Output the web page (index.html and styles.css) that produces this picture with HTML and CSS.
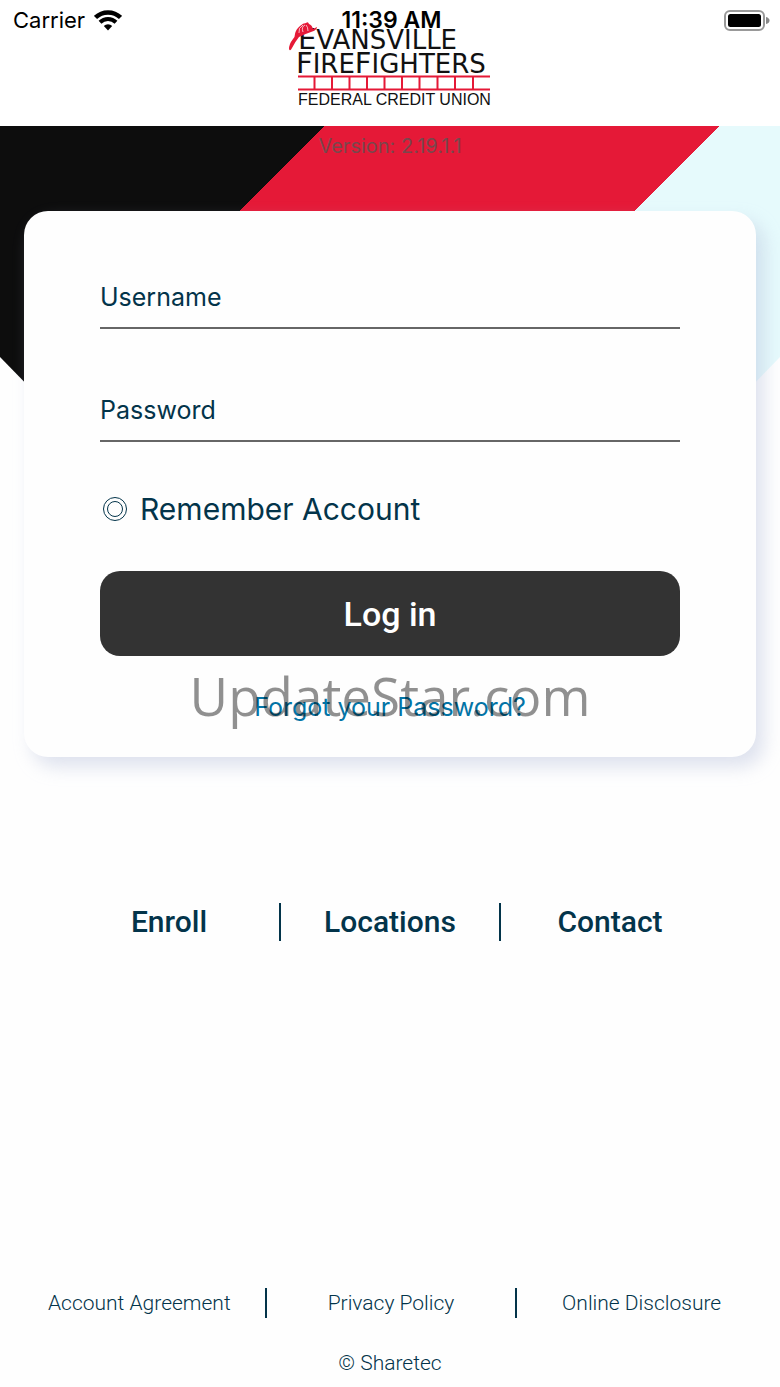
FILE: index.html
```html
<!DOCTYPE html>
<html lang="en">
<head>
    <meta charset="UTF-8">
    <meta name="viewport" content="width=device-width, initial-scale=1.0">
    <title>Evansville FireFighters Federal Credit Union</title>
    <link rel="stylesheet" href="styles.css">
</head>
<body>
    <header class="header">
        <div class="status-bar">
            <div class="carrier">
                <span>Carrier</span>
                <svg class="wifi" viewBox="0 0 28 21" aria-hidden="true">
                    <path d="M1.5 7.5 A18 18 0 0 1 26.5 7.5" fill="none" stroke="#000" stroke-width="4.500"/>
                    <path d="M6 12.3 A11.5 11.5 0 0 1 22 12.3" fill="none" stroke="#000" stroke-width="4"/>
                    <path d="M9.8 16 A6 6 0 0 1 18.2 16 L14 20.5 Z"/>
                </svg>
            </div>
            <time class="clock">11:39 AM</time>
            <svg class="battery" viewBox="0 0 46 21" aria-hidden="true">
                <rect x="1" y="1" width="39" height="19" rx="5" fill="#fff" stroke="#999" stroke-width="2"/>
                <rect x="4" y="4" width="33" height="13" rx="2.5"/>
                <path d="M42 7 Q45.500 8 45.500 10.500 Q45.500 13 42 14 Z" fill="#888"/>
            </svg>
        </div>
        <svg class="logo" viewBox="0 0 204 88" role="img" aria-label="Evansville FireFighters Federal Credit Union">
            <text class="logo-name" x="10" y="29"><tspan class="logo-cap">E</tspan>VANSVILLE</text>
            <text class="logo-name" x="8" y="53"><tspan class="logo-cap">F</tspan>IRE<tspan class="logo-cap">F</tspan>IGHTERS</text>
            <!-- ladder -->
            <path d="M10 56.500H202 M10 69.500H202 M26.500 56V70 M44 56V70 M61.500 56V70 M79 56V70 M96.500 56V70 M114 56V70 M131.500 56V70 M149.500 56V70 M167 56V70 M185 56V70" fill="none" stroke="#e51937" stroke-width="2"/>
            <text class="logo-sub" x="10" y="85">FEDERAL CREDIT UNION</text>
            <!-- helmet -->
            <path d="M1 29 Q1 24 5 19 Q7 17 7 14 Q8 9 12 6 Q15 3 18 3 Q20 1 21 4 Q24 5 25 9 L29 7 Q29 10 23 12 Q17 14 11 17 Q7 22 4 28 Q2 32 1 29 Z" fill="#e51937"/>
            <path d="M11 13 Q10 8 15 5 M15 12 Q13 7 17 5 M20 11 Q20 7 18 5" fill="none" stroke="#fff" stroke-width=".7"/>
        </svg>
    </header>

    <main class="hero">
        <p class="version">Version: 2.19.1.1</p>
        <form class="card">
            <div class="field">
                <label for="username">Username</label>
                <input id="username" type="text" autocomplete="username">
            </div>
            <div class="field">
                <label for="password">Password</label>
                <input id="password" type="password" autocomplete="current-password">
            </div>
            <div class="remember">
                <input id="remember" type="checkbox">
                <label for="remember">Remember Account</label>
            </div>
            <button class="login" type="button">Log in</button>
            <div class="forgot">
                <a href="#">Forgot your Password?</a>
                <span class="watermark">UpdateStar.com</span>
            </div>
        </form>
    </main>

    <nav class="links">
        <a href="#">Enroll</a>
        <a href="#">Locations</a>
        <a href="#">Contact</a>
    </nav>

    <footer class="footer">
        <div class="legal">
            <a href="#">Account Agreement</a>
            <a href="#">Privacy Policy</a>
            <a href="#">Online Disclosure</a>
        </div>
        <p class="copyright">© Sharetec</p>
    </footer>
</body>
</html>
```

FILE: styles.css
```css
* {
    box-sizing: border-box;
}

body {
    margin: 0;
    min-height: 100vh;
    display: flex;
    flex-direction: column;
    background: #fefefe;
    color: #03344a;
    font-family: Inter, "Liberation Sans", sans-serif;
}

a {
    color: inherit;
    text-decoration: none;
}

p {
    margin: 0;
}

/* Header */
.header {
    position: relative;
    display: flex;
    justify-content: center;
    padding: 20px 0 18px;
    background: #fff;
}

.logo {
    width: 204px;
    height: 88px;
}

.logo-name {
    font: 26px "DejaVu Sans", sans-serif;
    fill: #111;
}

.logo-cap {
    font-size: 29px;
}

.logo-sub {
    font: 16px "Liberation Sans", sans-serif;
    fill: #111;
}

/* The status bar lies over the header */
.status-bar {
    position: absolute;
    top: 0;
    left: 0;
    right: 0;
    display: grid;
    grid-template-columns: 1fr auto 1fr;
    align-items: center;
    height: 40px;
    padding: 0 10px 0 13px;
    color: #000;
    font-size: 22px;
}

.carrier {
    display: flex;
    align-items: center;
    gap: 9px;
}

.wifi {
    width: 28px;
    height: 21px;
}

.clock {
    font-size: 23px;
    font-weight: 600;
}

.battery {
    width: 46px;
    height: 21px;
    justify-self: end;
}

/* Login */
.hero {
    position: relative;
    padding: 0 24px;
}

.hero::before {
    content: "";
    position: absolute;
    inset: 0;
    z-index: -1;
    background: linear-gradient(135deg, #0d0d0d 23%, #e51937 23%, #e51937 51%, #e6fafc 51%);
    clip-path: polygon(0 0, 100% 0, 100% 231px, 50% 100%, 0 231px);
}

.version {
    height: 85px;
    padding-top: 8px;
    text-align: center;
    font-size: 20px;
    line-height: 24px;
    color: #79474d;
}

.card {
    padding: 56px 76px 34px;
    background: #fefefe;
    border-radius: 24px;
    box-shadow: 8px 10px 18px rgba(175, 185, 215, 0.4);
}

.field {
    display: flex;
    align-items: center;
    gap: 12px;
    height: 62px;
    margin-bottom: 51px;
    border-bottom: 2px solid #666;
    font-size: 25px;
}

.field input {
    flex: 1;
    min-width: 0;
    padding: 0;
    border: 0;
    outline: 0;
    background: none;
    font: inherit;
    color: inherit;
}

.remember {
    display: flex;
    align-items: center;
    gap: 13px;
    height: 40px;
    margin: -4px 0 42px 3px;
    font-size: 30px;
}

.remember input {
    appearance: none;
    width: 24px;
    height: 24px;
    margin: 0;
    border: 1px solid #03344a;
    border-radius: 50%;
    display: grid;
    place-items: center;
}

.remember input::before {
    content: "";
    width: 14px;
    height: 14px;
    border: 1px solid #03344a;
    border-radius: 50%;
}

.remember input:checked::before {
    background: #03344a;
}

.login {
    display: block;
    width: 100%;
    height: 85px;
    border: 0;
    border-radius: 20px;
    background: #333;
    color: #fff;
    font: 500 34px Roboto, sans-serif;
    cursor: pointer;
}

.forgot {
    position: relative;
    padding-top: 35px;
    text-align: center;
    font-size: 25px;
    line-height: 32px;
    color: #0374a6;
}

.watermark {
    position: absolute;
    inset: 0;
    font: 53px/80px "Open Sans", "Noto Sans", sans-serif;
    color: rgba(0, 0, 0, 0.43);
    pointer-events: none;
}

/* Links */
.links {
    display: grid;
    grid-template-columns: repeat(3, 1fr);
    margin-top: 146px;
    padding: 0 61px 0 59px;
    text-align: center;
    font: 500 30px/38px Roboto, sans-serif;
}

.links a + a {
    border-left: 2px solid #03344a;
}

/* Footer */
.footer {
    margin-top: auto;
    padding: 0 14px 9px;
    text-align: center;
    font: 300 21px/30px Roboto, sans-serif;
}

.legal {
    display: grid;
    grid-template-columns: repeat(3, 1fr);
    margin-bottom: 30px;
}

.legal a + a {
    border-left: 2px solid #03344a;
}
```
